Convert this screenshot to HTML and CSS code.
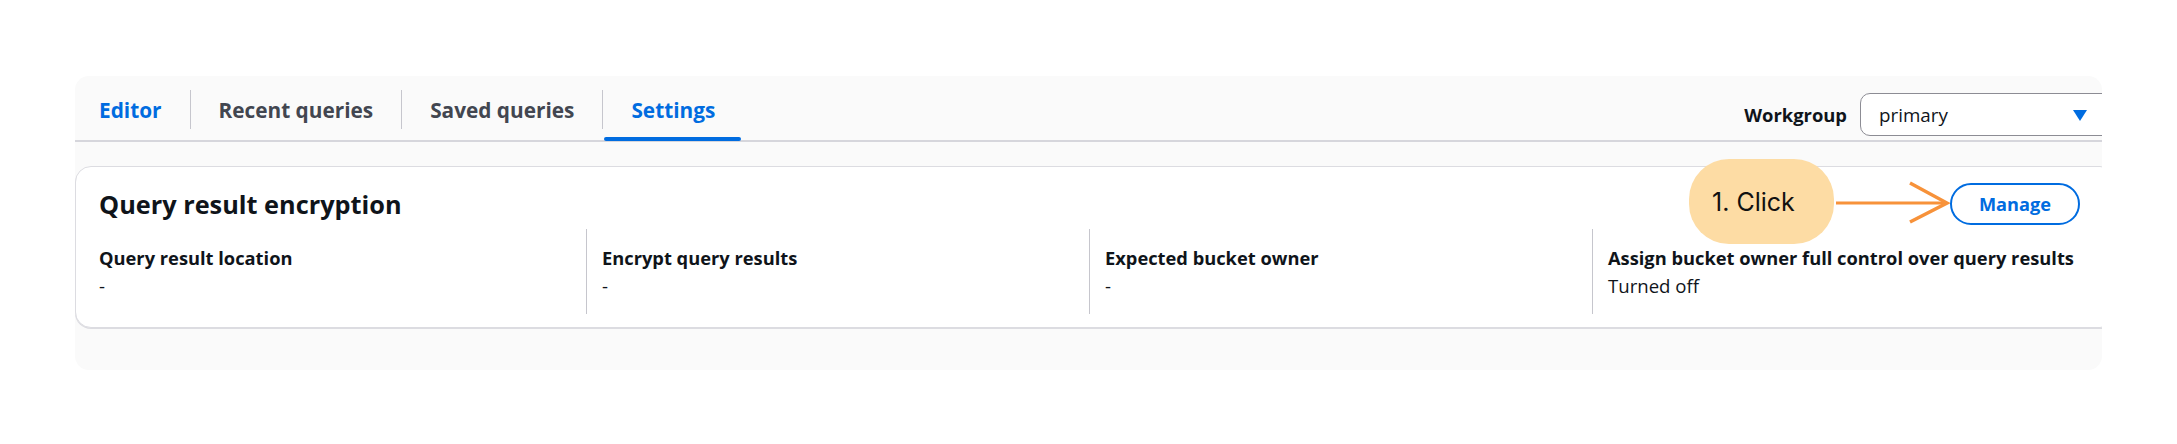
FILE: index.html
```html
<!DOCTYPE html>
<html lang="en">
<head>
<meta charset="utf-8">
<title>Settings</title>
<link rel="stylesheet" href="styles.css">
</head>
<body>
<div class="panel">
  <div class="inner">
    <div class="tabbar">
      <div class="tabs">
        <div class="tab tab-first tab-blue">Editor</div>
        <span class="sep"></span>
        <div class="tab">Recent queries</div>
        <span class="sep"></span>
        <div class="tab">Saved queries</div>
        <span class="sep"></span>
        <div class="tab tab-blue tab-active">Settings</div>
      </div>
      <div class="wg">
        <span class="wg-label">Workgroup</span>
        <div class="select">
          <span class="select-value">primary</span>
          <svg class="caret" width="14" height="11" viewBox="0 0 14 11"><polygon points="0,0 14,0 7,11" fill="#006ce0"/></svg>
        </div>
      </div>
    </div>
    <div class="content">
      <div class="card">
        <div class="card-head">
          <h2 class="card-title">Query result encryption</h2>
          <button class="btn">Manage</button>
        </div>
        <div class="grid">
          <div class="cell">
            <div class="label">Query result location</div>
            <div class="value">-</div>
          </div>
          <div class="cell">
            <div class="label">Encrypt query results</div>
            <div class="value">-</div>
          </div>
          <div class="cell">
            <div class="label">Expected bucket owner</div>
            <div class="value">-</div>
          </div>
          <div class="cell">
            <div class="label">Assign bucket owner full control over query results</div>
            <div class="value">Turned off</div>
          </div>
        </div>
        <div class="note">1. Click</div>
        <svg class="arrow" width="116" height="46" viewBox="0 0 116 46">
          <line x1="2" y1="23" x2="112" y2="23" stroke="#f7923a" stroke-width="3"/>
          <polyline points="76,3 113,23 76,42" fill="none" stroke="#f7923a" stroke-width="3.5"/>
        </svg>
      </div>
    </div>
  </div>
</div>
</body>
</html>
```
FILE: styles.css
```css
* { box-sizing: border-box; }
html, body { margin: 0; background: #ffffff; }
body {
  padding: 76px 75px 0;
  font-family: "Open Sans", "Liberation Sans", Arial, sans-serif;
  color: #0f141a;
}
.panel {
  background: #fafafa;
  border-radius: 14px;
  overflow: hidden;
}
.inner {
  width: calc(100% + 14px);
}
.tabbar {
  display: flex;
  justify-content: space-between;
  height: 66px;
  border-bottom: 2px solid #d6d6dc;
}
.tabs {
  display: flex;
  align-items: center;
  height: 64px;
}
.tab {
  position: relative;
  height: 64px;
  display: flex;
  align-items: center;
  padding: 4px 28px 0;
  font-size: 20.8px;
  line-height: 28px;
  font-weight: 700;
  color: #424650;
}
.tab-first { padding-left: 24px; }
.tab-blue { color: #006ce0; }
.tab-active::after {
  content: "";
  position: absolute;
  left: 1px;
  right: 2px;
  bottom: -1px;
  height: 4px;
  border-radius: 2px;
  background: #006ce0;
}
.sep {
  width: 1px;
  height: 39px;
  margin-top: 2px;
  background: #c6c6cd;
}
.wg {
  display: flex;
  align-items: center;
  gap: 13px;
  align-self: flex-start;
  margin-top: 17px;
}
.wg-label {
  font-size: 18.4px;
  font-weight: 700;
  line-height: 26px;
  color: #0f141a;
}
.select {
  width: 256px;
  height: 43px;
  border: 1px solid #8c8c94;
  border-radius: 10px;
  background: #ffffff;
  display: flex;
  align-items: center;
  justify-content: space-between;
  padding: 0 28px 0 18px;
}
.select-value {
  font-size: 18.8px;
  line-height: 26px;
  color: #0f141a;
}
.caret { display: block; margin-top: 2px; }
.content {
  padding: 24px 0 42px;
}
.card {
  position: relative;
  background: #ffffff;
  border: 1px solid #dcdce1;
  border-radius: 16px;
  box-shadow: 0 1px 0 #dcdce1;
  padding-bottom: 13px;
}
.card-head {
  display: flex;
  align-items: center;
  justify-content: space-between;
  padding: 16px 35px 0 23px;
  height: 58px;
}
.card-title {
  margin: 0;
  font-size: 25.3px;
  line-height: 34px;
  font-weight: 700;
  color: #0f141a;
}
.btn {
  height: 42px;
  padding: 0 27px;
  border: 2px solid #006ce0;
  border-radius: 21px;
  background: #ffffff;
  color: #006ce0;
  font-family: inherit;
  font-size: 18.2px;
  font-weight: 700;
  line-height: 26px;
}
.grid {
  display: grid;
  grid-template-columns: repeat(4, 1fr);
  margin: 4px 20px 0 7px;
}
.cell {
  border-left: 1px solid #c6c6cd;
  padding: 16px 0 15px 15px;
}
.cell:first-child { border-left-color: transparent; }
.label {
  font-size: 18.3px;
  line-height: 26px;
  font-weight: 700;
  color: #0f141a;
}
.value {
  margin-top: 2px;
  font-size: 18.6px;
  line-height: 26px;
  color: #0f141a;
}
.note {
  position: absolute;
  left: 1613px;
  top: -8px;
  width: 145px;
  height: 85px;
  border-radius: 40px;
  background: #fddca4;
  display: flex;
  align-items: center;
  padding-left: 23px;
  font-family: Inter, "Liberation Sans", sans-serif;
  font-size: 25px;
  line-height: 30px;
  color: #111111;
}
.arrow {
  position: absolute;
  left: 1758px;
  top: 13px;
  display: block;
}
```
